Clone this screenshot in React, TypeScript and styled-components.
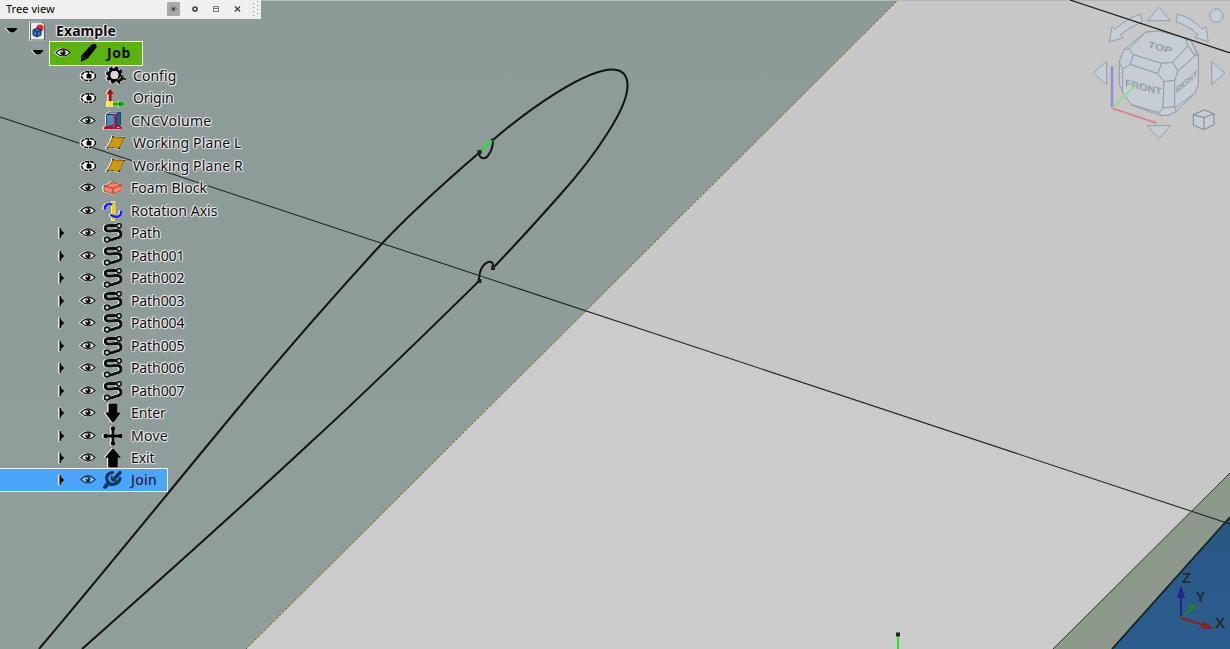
import React from "react";
import styled, { createGlobalStyle, css } from "styled-components";

const GlobalStyle = createGlobalStyle`
  html, body { margin: 0; padding: 0; overflow: hidden; }
  body { font-family: "Noto Sans", "Open Sans", sans-serif; background: #8d9b99; }
`;

const Window = styled.main`
  position: relative;
  width: 1230px;
  height: 649px;
  overflow: hidden;
`;

const Scene = styled.svg`
  position: absolute;
  inset: 0;
  display: block;
`;

const Panel = styled.aside`
  position: relative;
  width: 261px;
`;

const TitleBar = styled.header`
  display: flex;
  align-items: center;
  height: 19px;
  padding-left: 6px;
  background: #f0f0f0;
  color: #000;
  font-size: 11px;
  line-height: 16px;
`;

const Title = styled.span`
  flex: 1;
  height: 18px;
  letter-spacing: 0.05px;
`;

const Tools = styled.div`
  display: flex;
  width: 94px;
  height: 19px;
`;

const Tree = styled.div`
  display: flex;
  flex-direction: column;
  padding-top: 0.3px;
`;

const Row = styled.div<{ $indent: number; $selected?: boolean }>`
  display: flex;
  align-items: center;
  align-self: flex-start;
  box-sizing: border-box;
  height: 22.5px;
  padding-left: ${(p) => p.$indent}px;
  ${(p) =>
    p.$selected &&
    css`
      width: 168px;
      height: 24px;
      margin-top: -1px;
      background: #4aa5ff;
      border: 1px solid #eef6fb;
      border-left: 0;
    `}
`;

const JobBox = styled.div`
  display: flex;
  align-items: center;
  box-sizing: border-box;
  width: 94px;
  height: 25px;
  margin: -1px 0 -1px 5px;
  padding-left: 4px;
  border: 1px solid #f4f8ef;
  background: #5bb312;
`;

const Glyph = styled.svg<{ $gap?: number; $flat?: boolean }>`
  display: block;
  flex: none;
  overflow: visible;
  margin-left: ${(p) => p.$gap ?? 0}px;
  ${(p) =>
    !p.$flat &&
    css`
      filter: drop-shadow(0.8px 0 0.25px #eef0ef) drop-shadow(-0.8px 0 0.25px #eef0ef)
        drop-shadow(0 0.6px 0.2px #eef0ef);
    `}
`;

const Label = styled.span<{ $gap: number; $bold?: boolean; $flat?: boolean; $track?: number }>`
  margin-left: ${(p) => p.$gap}px;
  color: #0a0a0a;
  font-size: 14px;
  line-height: 20px;
  white-space: pre;
  letter-spacing: ${(p) => p.$track ?? -0.1}px;
  font-weight: ${(p) => (p.$bold ? 700 : 400)};
  ${(p) =>
    !p.$flat &&
    css`
      text-shadow: 1px 0 1px #eee, -1px 0 1px #eee, 0 1px 1px #eee, 0 -1px 1px #eee,
        1px 1px 1px #ddd, -1px -1px 1px #ddd;
    `}
`;

function Eye({ gap, faint, tint }: { gap: number; faint?: boolean; tint?: boolean }) {
  const ink = tint ? "#10385e" : "#141414";
  const white = tint ? "#a9d2f5" : "#eceeed";
  return (
    <Glyph width={18} height={16} viewBox="0 0 18 16" $gap={gap} $flat={tint}>
      {faint ? (
        <>
          <ellipse cx={9.5} cy={8} rx={7} ry={4.6} fill="#fff" stroke="#080808" strokeWidth={1.5} strokeDasharray="4 .8" />
          <rect x={7.5} y={6} width={5} height={4.5} rx={1} fill="#080808" />
          <path d="M9.5 3V7" stroke="#080808" strokeWidth={1.5} />
        </>
      ) : (
        <>
          <path d="M1.8 7.6Q9 .4 16.2 7.6Q9 14.2 1.8 7.6Z" fill={white} stroke={ink} strokeWidth={1.25} />
          <circle cx={9} cy={7.6} r={2.6} fill={ink} />
          <circle cx={8.1} cy={6.4} r={0.9} fill={white} />
        </>
      )}
    </Glyph>
  );
}

function Caret({ open }: { open?: boolean }) {
  return open ? (
    <Glyph width={12} height={8} viewBox="0 0 12 8">
      <path d="M.7 1H11.3V2L7.7 5.6H4.3L.7 2Z" fill="#000" />
    </Glyph>
  ) : (
    <Glyph width={8} height={12} viewBox="0 0 8 12">
      <path d="M1.5 .8V11.2H3V9.2L6.4 6L3 2.8V.8Z" fill="#000" />
    </Glyph>
  );
}

const hosePath = "M14.5 2.2C10 3.6 2.6 .8 2.4 5C2.2 9.6 8 7.8 13.5 7.6C19.4 7.4 19.2 14.4 15 14.8C11.5 15.2 9 18 4.500 17";

const drawings: Record<string, React.ReactNode> = {
  config: (
    <>
      <circle cx={8.5} cy={9} r={5.4} fill="none" stroke="#050505" strokeWidth={3} />
      <circle cx={8.5} cy={9} r={7.3} fill="none" stroke="#050505" strokeWidth={2.6} strokeDasharray="3.3 2.43" />
      <circle cx={8.5} cy={9} r={3.9} fill="#d5d8d7" />
      <path d="M11.5 16.5L17.5 11" stroke="#e8e8e8" strokeWidth={4} />
      <path d="M11.5 16L18 11.5" stroke="#111" strokeWidth={2.8} />
      <path d="M15 9.5l1 2 4 2M10 14l2 1 2 3" stroke="#111" strokeWidth={1.7} fill="none" />
    </>
  ),
  origin: (
    <>
      <path d="M4.2 16V5" stroke="#b50808" strokeWidth={3.2} />
      <path d="M.4 6L4.2 .2L8 6Z" fill="#b50808" />
      <path d="M4 16H14" stroke="#12a60c" strokeWidth={3} />
      <path d="M13 12.5L20 16L13 19.5Z" fill="#12a60c" />
      <rect x={1.2} y={13} width={5.8} height={5.8} fill="#ffe620" />
    </>
  ),
  volume: (
    <>
      <path d="M3.5 3.5L7.5 1H17.5L13 3.5Z" fill="#8ab5e0" stroke="#102940" strokeWidth={0.8} />
      <path d="M3.5 3.5H13V16.5H3.5Z" fill="#5587bf" stroke="#102940" strokeWidth={0.8} />
      <path d="M13 3.5L17.5 1V14L13 16.5Z" fill="#2a5691" stroke="#102940" strokeWidth={0.8} />
      <path d="M12 4V14M12 14L2 16.5M12 14L18 16M2 17.5H17.5" stroke="#b41320" strokeWidth={1.3} />
      <circle cx={12} cy={4.5} r={1.4} fill="#e01628" />
      <circle cx={12} cy={14} r={1.4} fill="#e01628" />
      <circle cx={2.2} cy={17} r={1.5} fill="#c01123" />
      <circle cx={17.8} cy={16.5} r={1.5} fill="#c01123" />
    </>
  ),
  plane: (
    <>
      <path d="M7 3.5Q12 5.5 18.5 4.5L13 15.5Q8 13.5 1.2 15L4.5 9.5Z" fill="#cc9a0c" stroke="#6b5009" strokeWidth={0.9} />
      <path d="M6 3.5h2M17.5 4.5h2M.5 15h2M12 15.5h2" stroke="#4a3706" strokeWidth={1.5} />
    </>
  ),
  foam: (
    <>
      <path d="M1 8L10 4.5L19 7V12.5L10 16L1 13Z" fill="#fd8266" stroke="#8a4a3b" strokeWidth={0.9} />
      <path d="M1 8L10 10.2L19 7M10 10.2V16" fill="none" stroke="#8a4a3b" strokeWidth={1} />
      <path d="M7 5.2Q10 1.5 13 5.2" fill="#a67843" stroke="#806037" strokeWidth={0.8} />
    </>
  ),
  rotation: (
    <>
      <path d="M10.6 .5V19.5" stroke="#f3ce13" strokeWidth={3} />
      <path d="M1.8 8.8C1.5 2.5 6.5 2.5 9.2 3.6" fill="none" stroke="#1720eb" strokeWidth={2.5} />
      <path d="M18 9.5C19.5 17.5 11 16.5 7.5 13.8" fill="none" stroke="#1720eb" strokeWidth={2.5} />
      <path d="M10.6 5V13" stroke="#f3ce13" strokeWidth={3} />
    </>
  ),
  path: (
    <>
      <path d={hosePath} fill="none" stroke="#111" strokeWidth={3} />
      <circle cx={16} cy={2.8} r={2.3} fill="#c5caca" stroke="#111" strokeWidth={1.6} />
      <circle cx={4} cy={16.6} r={2.5} fill="#c5caca" stroke="#111" strokeWidth={1.6} />
    </>
  ),
  enter: <path d="M6.5 .5H13.5Q14.5 .5 14.5 1.5V9.5H18L11 19Q10 19.8 9 19L2 9.5H5.5V1.5Q5.5 .5 6.5 .5Z" fill="#000" />,
  exit: <path d="M9.3 .8Q10 0 10.7 .8L18.2 9.8H14.8V18.5Q14.8 19.5 13.8 19.5H6.2Q5.2 19.5 5.2 18.5V9.8H1.8Z" fill="#000" />,
  move: (
    <>
      <path d="M10 2V18M2 10H18" stroke="#000" strokeWidth={2.8} />
      <g fill="#000">
        <circle cx={10} cy={2.5} r={2.2} /><circle cx={10} cy={17.5} r={2.2} />
        <circle cx={2.5} cy={10} r={2.2} /><circle cx={17.5} cy={10} r={2.2} />
      </g>
    </>
  ),
  join: (
    <g fill="none" stroke="#0b365f" strokeLinecap="round">
      <path d="M11 9L17 2.5" strokeWidth={3.4} />
      <path d="M9.5 2.5C3.5 3 2.5 8.5 5 12C8 16.5 16 14 17 8.5" strokeWidth={3.2} />
      <path d="M5 13.5L2 17" strokeWidth={4} />
      <path d="M8.8 6.5Q7.5 11.5 13 10.5" strokeWidth={2} />
    </g>
  ),
};

type Item = { name: string; icon: string; inner?: boolean; leaf?: boolean; track?: number };

const items: Item[] = [
  { name: "Config", icon: "config", inner: true, leaf: true, track: 0.05 },
  { name: "Origin", icon: "origin", inner: true, leaf: true },
  { name: "CNCVolume", icon: "volume", leaf: true, track: 0.25 },
  { name: "Working Plane L", icon: "plane", inner: true, leaf: true, track: 0.14 },
  { name: "Working Plane R", icon: "plane", inner: true, leaf: true, track: 0.14 },
  { name: "Foam Block", icon: "foam", leaf: true, track: 0.03 },
  { name: "Rotation Axis", icon: "rotation", leaf: true, track: 0.02 },
  ...["Path", "Path001", "Path002", "Path003", "Path004", "Path005", "Path006", "Path007"].map((name) => ({ name, icon: "path" })),
  { name: "Enter", icon: "enter" },
  { name: "Move", icon: "move", track: 0.25 },
  { name: "Exit", icon: "exit" },
  { name: "Join", icon: "join", track: 0.4 },
];

function TreeItem({ item }: { item: Item }) {
  const selected = item.name === "Join";
  return (
    <Row $indent={item.leaf ? 79 : 58} $selected={selected}>
      {!item.leaf && <Caret />}
      <Eye gap={item.leaf ? 0 : 13} faint={item.inner} tint={selected} />
      <Glyph width={20} height={20} viewBox="0 0 20 20" $gap={item.inner ? 9 : 6} $flat={selected}>
        {drawings[item.icon]}
      </Glyph>
      <Label $gap={item.inner ? 7 : 8} $flat={selected} $track={item.track}>{item.name}</Label>
    </Row>
  );
}

function NavigationCube() {
  return (
    <g transform="translate(1080 0) scale(.33333)" fill="#c5ced7" stroke="#929da5" strokeWidth={3} strokeLinejoin="round">
      <path d="M237 22L272 62H202Z" />
      <path d="M80 184V254L40 219Z" />
      <path d="M395 184V254L434 219Z" />
      <path d="M202 377H272L237 416Z" />
      <circle cx={409} cy={47} r={20} />
      <path d="M182 42L187 66Q147 82 121 105L131 113L88 126L96 80L106 88Q140 55 182 42Z" />
      <path d="M292 42L288 66Q325 76 354 105L344 112L385 125L378 80L367 88Q335 53 292 42Z" />
      <path d="M196 97L237 93L316 115L335 126L355 164V252L345 279L289 334L267 345L245 347L154 314L129 279L118 252V185L132 149Z" />
      <path d="M196 97L237 93L316 115L324 137L278 187L245 190L160 164L148 147Z" />
      <path d="M132 149L148 147L160 164L151 193L128 207L118 185Z" />
      <path d="M160 164L245 190L233 221L151 193Z" />
      <path d="M245 190L278 187L294 213L284 241L252 245L233 221Z" />
      <path d="M316 115L335 126L349 157L345 168L324 137ZM278 187L324 137L345 168L294 213Z" />
      <path d="M151 193L233 221L252 245L249 324L236 338L154 314L128 279V207Z" />
      <path d="M252 245L284 241V320L249 324Z" />
      <path d="M294 213L345 168L355 164V252L345 279L284 325V241Z" />
      <path d="M154 314L236 338L245 347L191 329ZM249 324L284 320L289 334L267 345L245 347L236 338Z" />
      <g fill="#969da3" stroke="none" fontFamily="Liberation Sans" fontWeight={700} fontSize={30}>
        <text transform="matrix(.94 .27 -.28 .83 202 141)" textLength={75} lengthAdjust="spacingAndGlyphs">TOP</text>
        <text transform="matrix(.96 .24 0 1 135 258)" textLength={115} lengthAdjust="spacingAndGlyphs">FRONT</text>
        <text transform="matrix(.76 -.63 0 1 287 283)" textLength={85} lengthAdjust="spacingAndGlyphs">RIGHT</text>
      </g>
      <path d="M96 323V199" stroke="#8e8cda" strokeWidth={7} />
      <path d="M98 323L169 253" stroke="#8edc94" strokeWidth={6} />
      <path d="M97 325L226 368" stroke="#df8588" strokeWidth={6} />
      <circle cx={226} cy={368} r={2} stroke="#df6c70" />
      <path d="M340 344L372 330L402 341V374L371 389L340 375ZM340 344L372 353L402 341M372 353V389" stroke="#7b858c" />
    </g>
  );
}

export default function App() {
  return (
    <>
      <GlobalStyle />
      <Window>
        <Scene width={1230} height={649} viewBox="0 0 1230 649">
          <defs>
            <linearGradient id="table" x2="0" y2="1">
              <stop offset="0" stopColor="#8c9a98" /><stop offset="1" stopColor="#919f9c" />
            </linearGradient>
            <linearGradient id="sea" x2="0" y2="1">
              <stop offset="0" stopColor="#295784" /><stop offset="1" stopColor="#2b5d8e" />
            </linearGradient>
          </defs>
          <path d="M0 0H1230V649H0Z" fill="url(#table)" />
          <path d="M898 0H1230V649H246Z" fill="#cacbca" />
          <path d="M898 0H1230V524L586 311Z" fill="#c7c7c7" />
          <path d="M1230 473V649H1053Z" fill="#8d998b" />
          <path d="M1230 517V649H1112Z" fill="url(#sea)" />
          <path d="M261 .5H1230" stroke="#b2bab8" />
          <path d="M898 0L246 649" stroke="#5b594c" />
          <path d="M898 0L246 649" stroke="#e0c53c" strokeDasharray="2 2.3" />
          <path d="M0 117L1230 524" stroke="#1b1f1e" strokeWidth={1.05} />
          <path d="M1230 473L1053 649" stroke="#30342f" />
          <path d="M1230 517L1112 649" stroke="#17201d" strokeWidth={1.8} />
          <g fill="none" stroke="#101211" strokeWidth={2}>
            <path d="M39 649C105 571 172 488 216 435C266 374 322 309 376 250C408 215 444 183 480 152" />
            <path d="M479 152C479 160 486 160 489 154C492 150 493 145 493 140" />
            <path d="M493 140C530 108 586 69 613 69.4C624 70 628 77 627.5 87C627 99 618 117 607 134C595 153 577 176 560 195C538 220 515 245 493 268" />
            <path d="M493 268C494 260 488 260 483 266C480 270 479 277 479 281" />
            <path d="M479 281C426 333 368 390 310 443C222 525 126 610 82 649" />
          </g>
          <path d="M481 150L493 140" stroke="#10ef16" strokeWidth={2} />
          <path d="M477.5 150h4v4h-4ZM491 138.5h3v2h-3ZM491 266h4v4h-4ZM477.5 279h4v4h-4ZM896 632.5h4v4h-4Z" fill="#222" />
          <path d="M898 637V649" stroke="#10ef16" strokeWidth={2} />
          <NavigationCube />
          <path d="M1070 0L1230 53" stroke="#151515" strokeWidth={1.2} />
          <g fill="none" strokeWidth={2}>
            <path d="M1181 618V594" stroke="#262487" />
            <path d="M1181 618L1191 609" stroke="#238323" />
            <path d="M1181 618L1203 625" stroke="#8b2020" />
          </g>
          <path d="M1181 585L1185 598H1177Z" fill="#262487" />
          <path d="M1195.5 603.5V608L1191.5 611.5L1188 607.5Z" fill="#238323" />
          <path d="M1214 629L1201 628.5L1203.5 621Z" fill="#8b2020" />
          <g fill="#252a2d" fontFamily="Liberation Sans" fontSize={15} fontWeight={700}>
            <text x={1182} y={583} textLength={9} lengthAdjust="spacingAndGlyphs">Z</text>
            <text x={1196} y={602} textLength={9} lengthAdjust="spacingAndGlyphs">Y</text>
            <text x={1215} y={628} textLength={10} lengthAdjust="spacingAndGlyphs">X</text>
          </g>
        </Scene>
        <Panel>
          <TitleBar>
            <Title>Tree view</Title>
            <Tools>
              <svg width={94} height={19} viewBox="0 0 94 19">
                <rect y={2} width={13} height={14} rx={1} fill="#a9a9a9" />
                <ellipse cx={6.5} cy={9} rx={3} ry={2} fill="none" stroke="#777" />
                <circle cx={6.5} cy={9} r={1.3} fill="#333" />
                <circle cx={28} cy={9} r={2} fill="none" stroke="#444" strokeWidth={1.7} />
                <path d="M46.5 6.5h5v5h-5ZM46.5 8.5h5" fill="none" stroke="#777" />
                <path d="M68 6.5l5 5M73 6.5l-5 5" stroke="#444" strokeWidth={1.4} />
                <g fill="#888">
                  {[1, 5, 9, 13].map((y) => (
                    <React.Fragment key={y}>
                      <rect x={90} y={y} width={1} height={1} />
                      <rect x={86} y={y + 2} width={1} height={1} />
                    </React.Fragment>
                  ))}
                </g>
              </svg>
            </Tools>
          </TitleBar>
          <Tree>
            <Row $indent={6}>
              <Caret open />
              <Glyph width={18} height={20} viewBox="0 0 18 20" $gap={11}>
                <path d="M1.5 1H13L15.5 4V19H1.5Z" fill="#e9ecec" stroke="#535c5e" />
                <circle cx={11} cy={7} r={3.5} fill="#e4222d" />
                <path d="M4 9l4-2 4 2v5l-4 2-4-2Z" fill="#3a6cb4" stroke="#112b55" />
                <path d="M4 9l4 2 4-2M8 11v5" fill="none" stroke="#112b55" />
              </Glyph>
              <Label $gap={9} $bold $track={0.1}>Example</Label>
            </Row>
            <Row $indent={32}>
              <Caret open />
              <JobBox>
                <Eye gap={0} />
                <Glyph width={20} height={20} viewBox="0 0 20 20" $gap={7} $flat>
                  <path d="M12 2Q13.5 .5 16.5 1Q18 2 17.5 4.5L9 15.2L2 19L2.5 12.5Z" fill="#000" />
                  <path d="M3 13Q4 15.5 7.5 15.5" fill="none" stroke="#397d0a" strokeWidth={0.6} />
                </Glyph>
                <Label $gap={8} $bold $flat $track={0.6}>Job</Label>
              </JobBox>
            </Row>
            {items.map((item) => <TreeItem key={item.name} item={item} />)}
          </Tree>
        </Panel>
      </Window>
    </>
  );
}
